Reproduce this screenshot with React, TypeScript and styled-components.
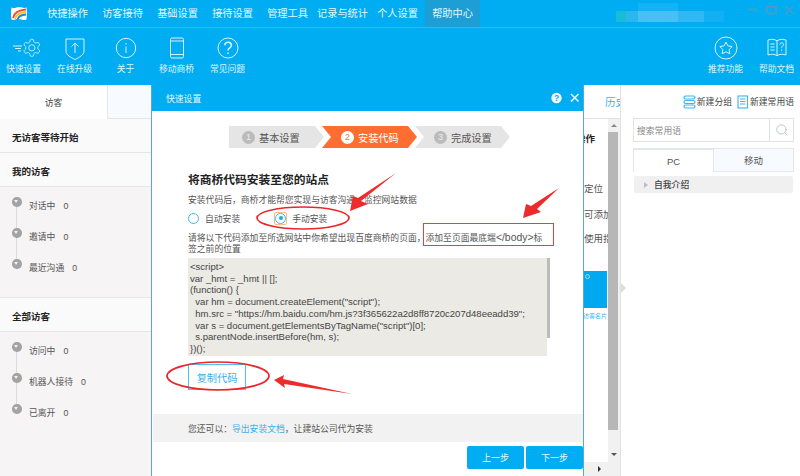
import React from 'react';
import styled, { createGlobalStyle } from 'styled-components';
import { Search } from 'lucide-react';

const GlobalStyle = createGlobalStyle`
  html, body { margin: 0; padding: 0; background: #fff; }
  body {
    font-family: "Liberation Sans", "Noto Sans CJK SC", sans-serif;
    font-size: 8.8px;
    color: #444;
  }
  * { box-sizing: border-box; }
`;

const BLUE = '#00adf2';
const ICON = '#d8f2fd';

const Page = styled.div`
  position: relative;
  width: 800px;
  height: 476px;
  overflow: hidden;
  display: flex;
  flex-direction: column;
`;

const MenuBar = styled.div`
  display: flex;
  height: 28px;
  padding-left: 40px;
  background: ${BLUE};
  border-bottom: 1px solid #29b9f5;
`;

const MenuItem = styled.div<{ $active?: boolean }>`
  width: 55px;
  display: flex;
  align-items: center;
  justify-content: center;
  padding-bottom: 2px;
  font-size: 10.2px;
  white-space: nowrap;
  color: #e4f6fe;
  background: ${p => (p.$active ? '#1d9fd6' : 'transparent')};
`;

const Logo = styled.svg`
  position: absolute;
  left: 10px;
  top: 6px;
`;

const Masked = styled.div`
  position: relative;
  width: 108px;
  height: 11px;
  margin: 11px 0 0 136px;
  background: linear-gradient(90deg, #17bcd6 0 10px, #2bb6ee 10px 22px, #46c0f6 22px 62px, #30b8f4 62px 88px, #12b0f3 88px 108px);
  &::before {
    content: '';
    position: absolute;
    left: 22px;
    top: -8px;
    width: 40px;
    height: 8px;
    background: #12b2f4;
  }
`;

const WindowControls = styled.svg`
  margin-left: auto;
  margin-right: 5px;
  margin-top: 5px;
`;

const ToolBar = styled.div`
  display: flex;
  height: 57px;
  margin: 0 -2px;
  background: ${BLUE};
`;

const ToolSpacer = styled.div`
  flex: 1;
`;

const ToolItem = styled.div`
  width: 51px;
  display: flex;
  flex-direction: column;
  align-items: center;
  padding-top: 8px;
  color: #dff5fe;
`;

const ToolIcon = styled.svg`
  display: block;
  height: 24px;
  width: 40px;
  overflow: visible;
`;

const ToolLabel = styled.div`
  margin-top: 3px;
  line-height: 12px;
  white-space: nowrap;
`;

const Body = styled.div`
  flex: 1;
  display: flex;
  min-height: 0;
`;

const Sidebar = styled.div`
  width: 151px;
  display: flex;
  flex-direction: column;
  background: #f6f4f5;
`;

const SideTabs = styled.div`
  display: flex;
  height: 34px;
  background: #fff;
`;

const SideTab = styled.div<{ $muted?: boolean }>`
  display: flex;
  align-items: center;
  justify-content: center;
  width: ${p => (p.$muted ? '44px' : '107px')};
  color: #444;
  ${p => p.$muted && 'background: #f7fbff; border-left: 1px solid #e3e7ea; border-bottom: 1px solid #e3e7ea;'}
`;

const SideHead = styled.div`
  height: 34px;
  display: flex;
  align-items: center;
  padding: 2px 0 0 12px;
  background: #fbfafa;
  border-bottom: 1px solid #e6e6e6;
  font-weight: bold;
  font-size: 9.5px;
  color: #222;
`;

const SideList = styled.div<{ $grow?: boolean }>`
  padding: 3px 0 ${p => (p.$grow ? '0' : '14px')};
  border-bottom: ${p => (p.$grow ? 'none' : '1px solid #e6e6e6')};
  flex: ${p => (p.$grow ? '1' : 'none')};
`;

const SideItem = styled.div`
  position: relative;
  height: 31px;
  display: flex;
  align-items: center;
  padding-left: 29px;
  gap: 8px;
  color: #555;
  &:not(:last-child)::after {
    content: '';
    position: absolute;
    left: 16px;
    top: 13px;
    height: 31px;
    width: 1px;
    background: #dcdcdc;
  }
`;

const Bullet = styled.span`
  position: absolute;
  z-index: 1;
  left: 12px;
  top: 7px;
  width: 9.5px;
  height: 9.5px;
  border-radius: 50%;
  background: #a3a3a3;
  &::after {
    content: '';
    position: absolute;
    left: 2.4px;
    top: 3.4px;
    border-left: 2.4px solid transparent;
    border-right: 2.4px solid transparent;
    border-top: 3px solid #f2f2f2;
  }
`;

const Center = styled.div`
  width: 470px;
  display: flex;
  flex-direction: column;
  border-right: 1px solid #dfe3e5;
`;

const CenterTabs = styled.div`
  height: 34px;
  padding-left: 454px;
  display: flex;
  align-items: center;
  overflow: hidden;
  border-bottom: 1px solid #dfe3e5;
  color: #3db4f2;
  font-size: 10.6px;
  white-space: nowrap;
`;

const CenterMain = styled.div`
  flex: 1;
  display: flex;
  min-height: 0;
`;

const CenterContent = styled.div`
  flex: 1;
  min-width: 0;
  overflow: hidden;
  padding-top: 14px;
  color: #444;
  white-space: nowrap;
  font-size: 9.5px;
`;

const ContentLine = styled.div<{ $mt: number; $left: number; $bold?: boolean }>`
  height: 12px;
  line-height: 12px;
  margin-top: ${p => p.$mt}px;
  padding-left: ${p => p.$left}px;
  font-weight: ${p => (p.$bold ? 'bold' : 'normal')};
  color: ${p => (p.$bold ? '#222' : '#555')};
`;

const Card = styled.div`
  position: relative;
  height: 37px;
  margin: 26px 1px 0 0;
  background: #00a8f0;
  &::after {
    content: '';
    position: absolute;
    right: 17px;
    top: 3px;
    width: 3px;
    height: 3px;
    border-radius: 50%;
    border: 1px solid #9be0fb;
  }
`;

const CardCaption = styled.div`
  margin-top: 5px;
  padding-left: 432px;
  line-height: 7px;
  font-size: 6px;
  color: #3db4f2;
`;

const VScroll = styled.div`
  width: 12px;
  display: flex;
  flex-direction: column;
  align-items: center;
  background: #f1f1f1;
`;

const ScrollArrow = styled.div<{ $down?: boolean }>`
  flex: none;
  width: 0;
  height: 0;
  margin-top: ${p => (p.$down ? '23px' : '5px')};
  border-left: 3px solid transparent;
  border-right: 3px solid transparent;
  ${p => (p.$down ? 'border-top: 3px solid #555;' : 'border-bottom: 3px solid #888;')}
`;

const ScrollThumb = styled.div`
  width: 10px;
  margin: 5px 2px 0 0;
  height: 298px;
  background: #b7b7b7;
`;

const HScroll = styled.div`
  height: 14px;
  padding-left: 447px;
  display: flex;
  align-items: center;
  background: #f1f1f1;
  &::after {
    content: '';
    border-top: 3px solid transparent;
    border-bottom: 3px solid transparent;
    border-left: 3px solid #333;
  }
`;

const Handle = styled.div`
  width: 8px;
  display: flex;
  align-items: center;
  &::after {
    content: '';
    margin-top: 14px;
    border-top: 5px solid transparent;
    border-bottom: 5px solid transparent;
    border-left: 5px solid #dcdcdc;
  }
`;

const Right = styled.div`
  flex: 1;
  display: flex;
  flex-direction: column;
  padding: 0 6px 0 4px;
`;

const RightActions = styled.div`
  height: 33px;
  display: flex;
  align-items: center;
  justify-content: flex-end;
  gap: 5px;
`;

const RightAction = styled.div`
  display: flex;
  align-items: center;
  gap: 1px;
  color: #444;
  white-space: nowrap;
`;

const SearchBox = styled.div`
  height: 24px;
  display: flex;
  border: 1px solid #dfe3e3;
`;

const SearchText = styled.div`
  flex: 1;
  display: flex;
  align-items: center;
  padding-left: 3px;
  color: #888;
`;

const SearchButton = styled.div`
  width: 24px;
  display: flex;
  align-items: center;
  justify-content: center;
  border-left: 1px solid #dfe3e3;
  color: #aab2b4;
`;

const PhraseTabs = styled.div`
  display: flex;
  height: 24px;
  margin-top: 6px;
`;

const PhraseTab = styled.div<{ $active?: boolean }>`
  flex: 1;
  display: flex;
  align-items: center;
  justify-content: center;
  font-size: 9.5px;
  color: #555;
  border: 1px solid #e3e7ea;
  background: ${p => (p.$active ? '#fff' : '#f7fbff')};
  ${p => (p.$active ? 'border-bottom: none; border-right: none; border-top-width: 2px;' : 'border-top-width: 1px;')}
`;

const PhraseRow = styled.div`
  height: 17px;
  margin: 4px 1px 0;
  display: flex;
  align-items: center;
  gap: 6px;
  padding-left: 10px;
  background: #f0f0f0;
  border-radius: 2px;
  color: #444;
  font-weight: 500;
  &::before {
    content: '';
    border-top: 3px solid transparent;
    border-bottom: 3px solid transparent;
    border-left: 4px solid #bdbdbd;
  }
`;

const Modal = styled.div`
  position: absolute;
  left: 151px;
  top: 85px;
  width: 433px;
  height: 391px;
  display: flex;
  flex-direction: column;
  background: #fff;
  border-left: 1px solid #5ba8ce;
  border-right: 1px solid #5ba8ce;
`;

const ModalHead = styled.div`
  flex: none;
  height: 26px;
  display: flex;
  align-items: center;
  padding: 0 2px 0 14px;
  background: ${BLUE};
  color: #e4f6fe;
`;

const HeadTitle = styled.div`
  flex: 1;
`;

const HeadIcons = styled.svg`
  display: block;
`;

const ModalBody = styled.div`
  flex: 1;
  min-height: 0;
  padding-left: 36px;
  padding-top: 15px;
`;

const Stepper = styled.div`
  display: flex;
  margin-left: 41px;
`;

const Step = styled.div<{ $active?: boolean; $first?: boolean }>`
  width: 95px;
  height: 22px;
  margin-right: -2px;
  display: flex;
  align-items: center;
  gap: 4px;
  padding-left: ${p => (p.$first ? '13px' : '19px')};
  font-size: 10.2px;
  color: ${p => (p.$active ? '#fff' : '#555')};
  background: ${p => (p.$active ? '#ff6e30' : '#e5e5e5')};
  clip-path: polygon(
    0 0,
    calc(100% - 9px) 0,
    100% 50%,
    calc(100% - 9px) 100%,
    0 100%
    ${p => (p.$first ? '' : ', 9px 50%')}
  );
`;

const StepNum = styled.span<{ $active?: boolean }>`
  width: 13px;
  height: 13px;
  border-radius: 50%;
  display: flex;
  align-items: center;
  justify-content: center;
  font-size: 9px;
  color: ${p => (p.$active ? '#ff6e30' : '#eee')};
  background: ${p => (p.$active ? '#fff' : '#bbb')};
`;

const Heading = styled.div`
  margin-top: 23px;
  line-height: 18px;
  font-size: 11.75px;
  font-weight: bold;
  color: #222;
`;

const Desc = styled.div`
  margin-top: 4px;
  line-height: 14px;
  color: #555;
`;

const RadioRow = styled.div`
  display: flex;
  align-items: center;
  height: 14px;
  margin-top: 4px;
  color: #555;
`;

const Radio = styled.span<{ $checked?: boolean }>`
  position: relative;
  width: 11px;
  height: 11px;
  margin: 0 6px 0 ${p => (p.$checked ? '35px' : '0')};
  border-radius: 50%;
  border: 1px solid #3fb8ee;
  &::before {
    content: '';
    position: absolute;
    inset: -2px;
    border-radius: 2px;
    border: ${p => (p.$checked ? '1px solid #f3c27d' : 'none')};
  }
  &::after {
    content: '';
    position: absolute;
    left: 2.5px;
    top: 2.5px;
    width: 4px;
    height: 4px;
    border-radius: 50%;
    background: ${p => (p.$checked ? '#21a7ea' : 'transparent')};
  }
`;

const Instruction = styled.div`
  width: 358px;
  height: 22px;
  margin-top: 8px;
  line-height: 11px;
  color: #555;
`;

const TagText = styled.span`
  font-size: 10.4px;
  line-height: 0;
`;

const CodeWrap = styled.div`
  display: flex;
  width: 362px;
  height: 98px;
  margin-top: 3px;
`;

const Code = styled.pre`
  flex: 1;
  margin: 0;
  padding: 3px 0 0 2px;
  overflow: hidden;
  background: #ebeae4;
  font-family: "Liberation Sans", sans-serif;
  font-size: 9.55px;
  line-height: 11.7px;
  color: #444;
`;

const CodeBar = styled.div`
  width: 3px;
  &::before {
    content: '';
    display: block;
    height: 80px;
    background: #bbb;
  }
`;

const CopyButton = styled.div`
  width: 58px;
  height: 26px;
  margin-top: 8px;
  display: flex;
  align-items: center;
  justify-content: center;
  border: 1px solid #4dc0f5;
  font-size: 10.2px;
  color: #3bb0ee;
`;

const Tip = styled.div`
  flex: none;
  height: 28px;
  margin-left: 1px;
  padding-left: 35px;
  display: flex;
  align-items: center;
  background: #f2f2f2;
  color: #555;
`;

const TipLink = styled.span`
  color: #3bb0ee;
`;

const ModalFoot = styled.div`
  flex: none;
  height: 34px;
  display: flex;
  justify-content: flex-end;
  gap: 2px;
  padding-top: 4px;
`;

const FootButton = styled.div`
  width: 57px;
  height: 23px;
  display: flex;
  align-items: center;
  justify-content: center;
  background: ${BLUE};
  border-radius: 2px;
  color: #e8f8fe;
  font-size: 9px;
`;

const Marks = styled.svg`
  position: absolute;
  left: 0;
  top: 0;
  pointer-events: none;
`;

const leftTools = ['快速设置', '在线升级', '关于', '移动商桥', '常见问题'];

const toolDrawings: Record<string, React.ReactNode> = {
  快速设置: (
    <>
      <g transform="translate(17.5 1.5) scale(0.86)">
        <path d="M12.22 2h-.44a2 2 0 0 0-2 2v.18a2 2 0 0 1-1 1.73l-.43.25a2 2 0 0 1-2 0l-.15-.08a2 2 0 0 0-2.73.73l-.22.38a2 2 0 0 0 .73 2.73l.15.1a2 2 0 0 1 1 1.72v.51a2 2 0 0 1-1 1.74l-.15.09a2 2 0 0 0-.73 2.73l.22.38a2 2 0 0 0 2.73.73l.15-.08a2 2 0 0 1 2 0l.43.25a2 2 0 0 1 1 1.73V20a2 2 0 0 0 2 2h.44a2 2 0 0 0 2-2v-.18a2 2 0 0 1 1-1.73l.43-.25a2 2 0 0 1 2 0l.15.08a2 2 0 0 0 2.73-.73l.22-.39a2 2 0 0 0-.73-2.73l-.15-.08a2 2 0 0 1-1-1.74v-.5a2 2 0 0 1 1-1.74l.15-.09a2 2 0 0 0 .73-2.73l-.22-.38a2 2 0 0 0-2.73-.73l-.15.08a2 2 0 0 1-2 0l-.43-.25a2 2 0 0 1-1-1.73V4a2 2 0 0 0-2-2z" />
        <circle cx="12" cy="12" r="3.6" />
      </g>
      <path d="M9 10h9M11 12.5h6M14 15h3" />
    </>
  ),
  在线升级: (
    <>
      <path d="M11 3h18v12c0 4-5 6.5-9 8.5C16 21.5 11 19 11 15z" />
      <path d="M20 17V7M16.5 10.5 20 7l3.5 3.5" />
    </>
  ),
  关于: (
    <>
      <circle cx="20" cy="12" r="9.7" />
      <path d="M20 10.5V17M20 7v1.6" />
    </>
  ),
  移动商桥: (
    <>
      <rect x="13.5" y="2" width="13" height="20" rx="1.5" />
      <path d="M13.5 5h13M13.5 18.5h13" />
    </>
  ),
  常见问题: (
    <>
      <circle cx="20" cy="12" r="10" />
      <path d="M16.8 9.2c.3-4.2 6.6-4 6.6.1 0 2.6-3.4 2.6-3.4 5.3M20 16.4v1.6" strokeWidth="1.5" />
    </>
  ),
  推荐功能: (
    <>
      <circle cx="20" cy="12" r="11" />
      <path d="m20 6 1.9 3.9 4.3.6-3.1 3 .7 4.3-3.8-2-3.8 2 .7-4.3-3.1-3 4.3-.6z" />
    </>
  ),
  帮助文档: (
    <>
      <path d="M11 4c3-1 6.5-1 9 .8 2.5-1.8 6-1.8 9-.8v15c-3-1-6.5-1-9 .6-2.5-1.6-6-1.6-9-.6z" />
      <path d="M13.5 8h4M13.5 11h4M13.5 14h4M20 4.8v14.8M22.8 8.5c.3-2.3 3.7-2.2 3.7 0 0 1.5-1.8 1.5-1.8 3.2M24.7 13.5v1.3" />
    </>
  ),
};

const Tool = ({ name }: { name: string }) => (
  <ToolItem>
    <ToolIcon viewBox="0 0 40 24" fill="none" stroke={ICON} strokeWidth="1">
      {toolDrawings[name]}
    </ToolIcon>
    <ToolLabel>{name}</ToolLabel>
  </ToolItem>
);

const codeText = `<script>
var _hmt = _hmt || [];
(function() {
  var hm = document.createElement("script");
  hm.src = "https://hm.baidu.com/hm.js?3f365622a2d8ff8720c207d48eeadd39";
  var s = document.getElementsByTagName("script")[0];
  s.parentNode.insertBefore(hm, s);
})();
</script>`;

const SideGroup = ({ title, items, grow }: { title: string; items: [string, number][]; grow?: boolean }) => (
  <>
    <SideHead>{title}</SideHead>
    <SideList $grow={grow}>
      {items.map(([label, count]) => (
        <SideItem key={label}>
          <Bullet />
          <span>{label}</span>
          <span>{count}</span>
        </SideItem>
      ))}
    </SideList>
  </>
);

export default function App() {
  return (
    <Page>
      <GlobalStyle />
      <MenuBar>
        {['快捷操作', '访客接待', '基础设置', '接待设置', '管理工具', '记录与统计', '个人设置'].map(m => (
          <MenuItem key={m}>{m}</MenuItem>
        ))}
        <MenuItem $active>帮助中心</MenuItem>
        <Masked />
        <WindowControls width="50" height="12" viewBox="0 0 50 12" fill="none" stroke="#4f9dbf" strokeWidth="1.4">
          <path d="M3 4.5h10M22 1.5h9v7h-9zM40 1l8.500 8M48.500 1 40 9" />
        </WindowControls>
      </MenuBar>
      <Logo width="18" height="16" viewBox="0 0 18 16">
        <path d="M1.5 1.5c2 .8 3 .8 5 0s4-.8 6 0 2.5.5 4 0c.6 3 .6 9 0 12-2 .8-3.5.6-5 .1s-4-.8-6 0-3 .4-4-.1c-.6-4-.6-8 0-12z" fill="#fff" />
        <path d="M3 12c1-5 6-8 13-8.500" fill="none" stroke="#ee4b3d" strokeWidth="1.8" />
        <path d="M5 13c1-4 5-6.500 11-7" fill="none" stroke="#f6c22d" strokeWidth="1.8" />
        <path d="M7.500 13.500c1-3 4-4.800 8.500-5" fill="none" stroke="#2a7fd6" strokeWidth="1.8" />
      </Logo>

      <ToolBar>
        {leftTools.map(t => <Tool key={t} name={t} />)}
        <ToolSpacer />
        <Tool name="推荐功能" />
        <Tool name="帮助文档" />
      </ToolBar>

      <Body>
        <Sidebar>
          <SideTabs>
            <SideTab>访客</SideTab>
            <SideTab $muted />
          </SideTabs>
          <SideHead>无访客等待开始</SideHead>
          <SideGroup title="我的访客" items={[['对话中', 0], ['邀请中', 0], ['最近沟通', 0]]} />
          <SideGroup title="全部访客" items={[['访问中', 0], ['机器人接待', 0], ['已离开', 0]]} grow />
        </Sidebar>

        <Center>
          <CenterTabs>历史</CenterTabs>
          <CenterMain>
            <CenterContent>
              <ContentLine $mt={0} $left={425} $bold>操作</ContentLine>
              <ContentLine $mt={38} $left={433}>定位</ContentLine>
              <ContentLine $mt={14} $left={433}>可添加</ContentLine>
              <ContentLine $mt={12} $left={433}>使用指南</ContentLine>
              <Card />
              <CardCaption>访客名片</CardCaption>
            </CenterContent>
            <VScroll>
              <ScrollArrow />
              <ScrollThumb />
              <ScrollArrow $down />
            </VScroll>
          </CenterMain>
          <HScroll />
        </Center>

        <Handle />

        <Right>
          <RightActions>
            <RightAction>
              <svg width="13" height="14" viewBox="0 0 13 14" fill="none" stroke="#3fb4f0" strokeWidth="1.2">
                <rect x="1" y="1" width="11" height="3" rx="1.5" />
                <rect x="1" y="5.5" width="11" height="3" rx="1.5" />
                <rect x="1" y="10" width="11" height="3" rx="1.5" />
              </svg>
              新建分组
            </RightAction>
            <RightAction>
              <svg width="12" height="14" viewBox="0 0 12 14" fill="none" stroke="#3fb4f0" strokeWidth="1.1">
                <rect x="1" y="1" width="9.5" height="12" />
                <path d="M3 4h5.5M3 6.5h5.5M3 9h5.5" />
              </svg>
              新建常用语
            </RightAction>
          </RightActions>
          <SearchBox>
            <SearchText>搜索常用语</SearchText>
            <SearchButton><Search size={14} strokeWidth={1.2} /></SearchButton>
          </SearchBox>
          <PhraseTabs>
            <PhraseTab $active>PC</PhraseTab>
            <PhraseTab>移动</PhraseTab>
          </PhraseTabs>
          <PhraseRow>自我介绍</PhraseRow>
        </Right>
      </Body>

      <Modal>
        <ModalHead>
          <HeadTitle>快速设置</HeadTitle>
          <HeadIcons width="30" height="12" viewBox="0 0 30 12">
            <circle cx="5.5" cy="6" r="5.2" fill="#eefaff" />
            <text x="5.5" y="9" fontSize="8.5" fontWeight="bold" textAnchor="middle" fill={BLUE}>?</text>
            <path d="M20 2l7.500 7.500M27.500 2 20 9.500" stroke="#eefaff" strokeWidth="1.5" fill="none" />
          </HeadIcons>
        </ModalHead>
        <ModalBody>
          <Stepper>
            <Step $first><StepNum>1</StepNum>基本设置</Step>
            <Step $active><StepNum $active>2</StepNum>安装代码</Step>
            <Step><StepNum>3</StepNum>完成设置</Step>
          </Stepper>
          <Heading>将商桥代码安装至您的站点</Heading>
          <Desc>安装代码后，商桥才能帮您实现与访客沟通、监控网站数据</Desc>
          <RadioRow>
            <Radio />自动安装
            <Radio $checked />手动安装
          </RadioRow>
          <Instruction>请将以下代码添加至所选网站中你希望出现百度商桥的页面，添加至页面最底端<TagText>&lt;/body&gt;</TagText>标签之前的位置</Instruction>
          <CodeWrap>
            <Code>{codeText}</Code>
            <CodeBar />
          </CodeWrap>
          <CopyButton>复制代码</CopyButton>
        </ModalBody>
        <Tip>您还可以：<TipLink>导出安装文档</TipLink>，让建站公司代为安装</Tip>
        <ModalFoot>
          <FootButton>上一步</FootButton>
          <FootButton>下一步</FootButton>
        </ModalFoot>
      </Modal>

      <Marks width="800" height="476" viewBox="0 0 800 476" fill="none">
        <rect x="423.5" y="223.5" width="130" height="22" stroke="#f03c3c" />
        <ellipse cx="303" cy="218" rx="46" ry="11" stroke="#e8262b" strokeWidth="1.7" />
        <ellipse cx="218" cy="376" rx="51" ry="14" stroke="#e8262b" strokeWidth="1.7" />
        <polygon points="396,173 361,201 368,204 350,211 353,196 358,198" fill="#ee2b2b" />
        <polygon points="559,188 537,209 541,212 523,218 526,204 531,206" fill="#ee2b2b" />
        <polygon points="274,380 284,375 283,379 352,394 284,384 285,388" fill="#ee2b2b" />
      </Marks>
    </Page>
  );
}
